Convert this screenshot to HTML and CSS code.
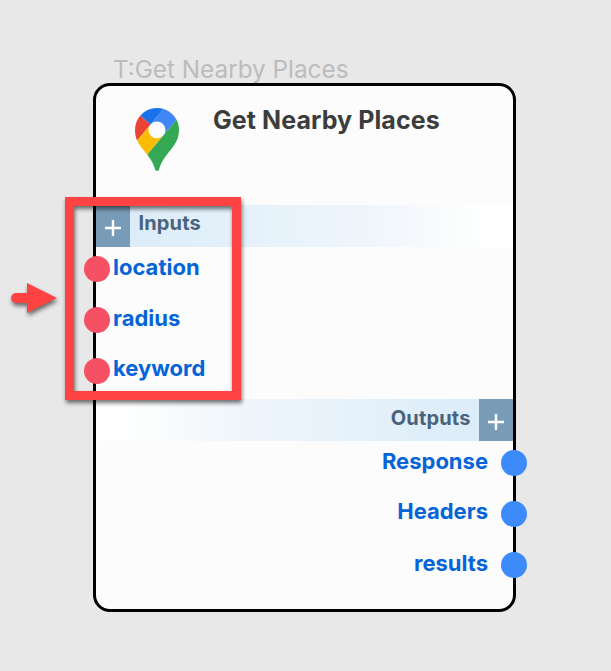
FILE: index.html
```html
<!DOCTYPE html>
<html lang="en">
<head>
<meta charset="utf-8">
<title>Get Nearby Places</title>
<link rel="stylesheet" href="styles.css">
</head>
<body>
<main class="canvas">
  <div class="caption">T:Get Nearby Places</div>
  <section class="node">
    <header class="node-header">
      <svg class="pin" viewBox="0 0 92.4 132.4">
        <path fill="#1a73e8" d="M60.2 2.2C55.8.8 51 0 46.1 0 32 0 19.3 6.4 10.8 16.5l21.8 18.3L60.2 2.2z"/>
        <path fill="#ea4335" d="M10.8 16.5C4.1 24.5 0 34.9 0 46.1c0 8.7 1.7 15.7 4.6 22l28-33.3-21.8-18.3z"/>
        <path fill="#4285f4" d="M46.2 28.5c9.8 0 17.7 7.9 17.7 17.7 0 4.3-1.6 8.3-4.2 11.4 0 0 13.9-16.6 27.5-32.7-5.6-10.8-15.3-19-27-22.7L32.6 34.8c3.3-3.8 8.1-6.3 13.6-6.3"/>
        <path fill="#fbbc04" d="M46.2 63.8c-9.8 0-17.7-7.9-17.7-17.7 0-4.3 1.5-8.3 4.1-11.3l-28 33.3c4.8 10.6 12.8 19.2 21 29.9l34.1-40.5c-3.3 3.9-8.1 6.3-13.5 6.3"/>
        <path fill="#34a853" d="M59.1 109.2c15.4-24.1 33.3-35 33.3-63 0-7.7-1.9-14.9-5.2-21.3L25.6 98c2.6 3.4 5.3 7.3 7.9 11.3 9.4 14.5 6.8 23.1 12.8 23.1s3.4-8.7 12.8-23.2"/>
      </svg>
      <h1 class="title">Get Nearby Places</h1>
    </header>
    <div class="bar bar-in">
      <span class="add"><svg class="plus" viewBox="0 0 18 18"><path d="M9 1v16M1 9h16"/></svg></span>
      <span class="bar-label">Inputs</span>
    </div>
    <div class="ports ports-in">
      <div class="port"><i class="dot"></i><span class="port-name">location</span></div>
      <div class="port"><i class="dot"></i><span class="port-name">radius</span></div>
      <div class="port"><i class="dot"></i><span class="port-name">keyword</span></div>
    </div>
    <div class="bar bar-out">
      <span class="bar-label">Outputs</span>
      <span class="add"><svg class="plus" viewBox="0 0 18 18"><path d="M9 1v16M1 9h16"/></svg></span>
    </div>
    <div class="ports ports-out">
      <div class="port"><span class="port-name">Response</span><i class="dot"></i></div>
      <div class="port"><span class="port-name">Headers</span><i class="dot"></i></div>
      <div class="port"><span class="port-name">results</span><i class="dot"></i></div>
    </div>
  </section>
  <div class="highlight"></div>
  <svg class="arrow" viewBox="0 0 46 30"><path d="M5 10H16V0L46 15L16 30V20H5A5 5 0 0 1 5 10Z"/></svg>
</main>
</body>
</html>
```
FILE: styles.css
```css
* { box-sizing: border-box; }
body { margin: 0; background: #e8e8e8; font-family: Inter, "Liberation Sans", sans-serif; }
.canvas { position: relative; width: 611px; height: 671px; padding: 53px 0 0 93px; overflow: hidden; }
.caption { height: 30px; padding: 1px 0 0 20px; font-size: 24.3px; line-height: 30px; color: #bcbcbc; white-space: nowrap; }
.node { width: 423px; height: 529px; border: 3px solid #000; border-radius: 17px; background: #fcfcfc; }
.node-header { display: flex; height: 119px; padding: 22px 0 0 39px; }
.pin { width: 44px; height: 63px; flex: none; }
.title { margin: -3px 0 0 34px; font-size: 25px; font-weight: 700; letter-spacing: .08px; line-height: 30px; color: #3c3c3c; white-space: nowrap; }
.bar { display: flex; height: 42px; }
.bar-in { background: linear-gradient(90deg, #d9eaf7, #e6f2fb 40%, #eff5fb 65%, #fdfefe 90%, #fff); }
.bar-out { justify-content: flex-end; background: linear-gradient(270deg, #d9eaf7, #e6f2fb 40%, #eff5fb 65%, #fdfefe 90%, #fff); }
.add { display: flex; width: 34px; align-items: center; justify-content: center; background: #789cb7; padding-top: 4px; }
.plus { width: 18px; height: 18px; fill: none; stroke: #fff; stroke-width: 2.4; }
.bar-label { padding: 0 8.5px; font-size: 20px; font-weight: 700; letter-spacing: .15px; line-height: 37px; color: #4a637d; }
.bar-out .bar-label { padding-top: 1px; }
.ports { display: flex; flex-direction: column; }
.ports-in { height: 152px; padding-top: 9px; gap: 25px; }
.ports-out { padding-top: 9px; gap: 25px; }
.port { display: flex; height: 26px; align-items: center; }
.ports-in .port { margin-left: -12px; gap: 3px; }
.ports-out .port { margin-right: -14px; gap: 13px; justify-content: flex-end; }
.dot { width: 26px; height: 26px; border-radius: 50%; background: #f55064; }
.ports-out .dot { background: #3d8bfb; }
.port-name { margin-top: -5px; font-size: 22px; font-weight: 700; line-height: 26px; color: #0564d8; }
.ports-in .port:last-child .port-name, .ports-out .port:nth-child(2) .port-name { margin-top: -7px; }
.highlight { position: absolute; left: 65px; top: 197px; width: 176px; height: 203px; border: 9px solid #ff4242; filter: drop-shadow(1px 3px 2px rgba(0, 0, 0, .55)); }
.arrow { position: absolute; left: 11px; top: 283px; width: 46px; height: 30px; overflow: visible; fill: #ff4242; filter: drop-shadow(1px 3px 2px rgba(0, 0, 0, .55)); }
```
